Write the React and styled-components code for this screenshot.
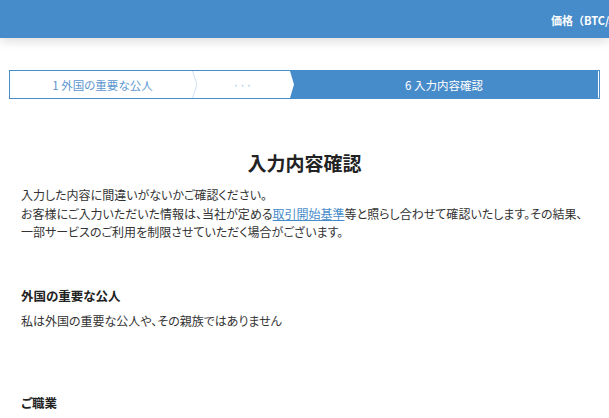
import React from "react";
import styled, { createGlobalStyle } from "styled-components";

const Global = createGlobalStyle`
  html, body {
    margin: 0;
    padding: 0;
    background: #ffffff;
    overflow: hidden;
  }
  body {
    font-family: "Noto Sans CJK JP", "Noto Sans", sans-serif;
    font-feature-settings: "palt";
    color: #333333;
  }
`;

const BLUE = "#468bca";

const Header = styled.header`
  height: 38px;
  background: ${BLUE};
  display: flex;
  align-items: center;
  box-shadow: 0 3px 10px rgba(0, 0, 0, 0.14);
  position: relative;
  z-index: 1;
`;

const Price = styled.div`
  margin-left: auto;
  width: 58px;
  overflow: hidden;
  white-space: nowrap;
  text-overflow: clip;
  color: #ffffff;
  font-size: 11px;
  font-weight: 700;
  font-feature-settings: normal;
  margin-top: 1px;
`;

const Main = styled.main`
  padding: 32px 9px 0;
`;

const Steps = styled.ol`
  list-style: none;
  margin: 0;
  padding: 0 1px 0 0;
  height: 29px;
  border: 1px solid ${BLUE};
  box-sizing: border-box;
  display: flex;
`;

const Step = styled.li`
  position: relative;
  flex: ${(p) => (p.$w ? `0 0 ${p.$w}px` : "1 1 auto")};
  display: flex;
  align-items: center;
  justify-content: center;
  font-size: 11.5px;
  color: ${(p) => (p.$active ? "#ffffff" : p.$faint ? "#9cc6ea" : "#5b96d0")};
  background: ${(p) => (p.$active ? BLUE : "transparent")};
  clip-path: ${(p) =>
    p.$active ? "polygon(0 0, 100% 0, 100% 100%, 0 100%, 4px 50%)" : "none"};
`;

const Chevron = styled.svg`
  position: absolute;
  right: -3px;
  top: 0;
  width: 6px;
  height: 27px;
`;

const Title = styled.h1`
  margin: 50px 0 0;
  text-align: center;
  font-size: 19px;
  font-weight: 700;
  line-height: 28px;
  color: #222222;
`;

const Body = styled.div`
  padding: 0 12px;
`;

const Intro = styled.p`
  margin: 9px 0 0;
  font-size: 12px;
  line-height: 18.5px;
`;

const Link = styled.a`
  color: ${BLUE};
  text-decoration: underline;
`;

const Section = styled.section`
  margin-top: ${(p) => p.$top}px;
`;

const SectionTitle = styled.h2`
  margin: 0;
  font-size: 12.5px;
  font-weight: 700;
  line-height: 18px;
  color: #222222;
`;

const SectionText = styled.p`
  margin: 7px 0 0;
  font-size: 12px;
  line-height: 18px;
`;

const Sep = () => (
  <Chevron viewBox="0 0 6 27">
    <polyline points="0.5,0 5,13.5 0.5,27" fill="none" stroke="#cfe2f3" strokeWidth="1" />
  </Chevron>
);

export default function App() {
  return (
    <>
      <Global />
      <Header>
        <Price>価格（BTC/JPY）</Price>
      </Header>
      <Main>
        <Steps>
          <Step $w={185}>
            1 外国の重要な公人
            <Sep />
          </Step>
          <Step $w={95} $faint>
            ···
          </Step>
          <Step $active>6 入力内容確認</Step>
        </Steps>
        <Title>入力内容確認</Title>
        <Body>
          <Intro>
            入力した内容に間違いがないかご確認ください。
            <br />
            お客様にご入力いただいた情報は、当社が定める<Link href="#">取引開始基準</Link>
            等と照らし合わせて確認いたします。その結果、一部サービスのご利用を制限させていただく場合がございます。
          </Intro>
          <Section $top={45}>
            <SectionTitle>外国の重要な公人</SectionTitle>
            <SectionText>私は外国の重要な公人や、その親族ではありません</SectionText>
          </Section>
          <Section $top={64}>
            <SectionTitle>ご職業</SectionTitle>
          </Section>
        </Body>
      </Main>
    </>
  );
}
